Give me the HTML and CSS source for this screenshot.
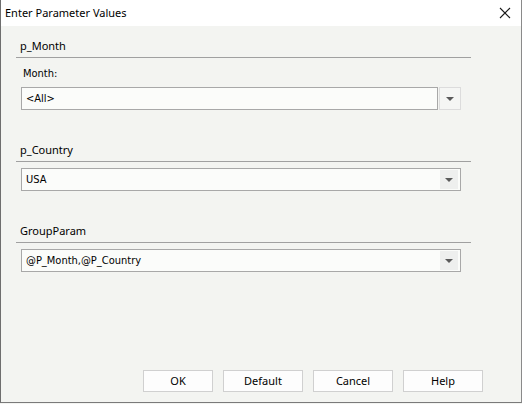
FILE: index.html
```html
<!DOCTYPE html>
<html>
<head>
<meta charset="utf-8">
<link rel="stylesheet" href="styles.css">
</head>
<body>
<div class="window">
  <div class="titlebar">
    <span class="title">Enter Parameter Values</span>
    <svg class="close" width="12" height="12" viewBox="0 0 12 12"><path d="M1 1 L11 11 M11 1 L1 11" stroke="#1a1a1a" stroke-width="1.1" fill="none"/></svg>
  </div>
  <div class="content">
    <div class="group">
      <div class="group-head">p_Month</div>
      <div class="group-body">
        <div class="field-label">Month:</div>
        <div class="split">
          <div class="textbox">&lt;All&gt;</div>
          <div class="dropbtn"><span class="arrow"></span></div>
        </div>
      </div>
    </div>
    <div class="group">
      <div class="group-head">p_Country</div>
      <div class="group-body">
        <div class="combo">
          <div class="combo-text">USA</div>
          <div class="combo-btn"><span class="arrow"></span></div>
        </div>
      </div>
    </div>
    <div class="group">
      <div class="group-head">GroupParam</div>
      <div class="group-body">
        <div class="combo">
          <div class="combo-text">@P_Month,@P_Country</div>
          <div class="combo-btn"><span class="arrow"></span></div>
        </div>
      </div>
    </div>
  </div>
  <div class="footer">
    <div class="btn btn-ok">OK</div>
    <div class="btn">Default</div>
    <div class="btn">Cancel</div>
    <div class="btn">Help</div>
  </div>
</div>
</body>
</html>
```
FILE: styles.css
```css
html, body {
  margin: 0;
  padding: 0;
  background: #f3f4f1;
}
.window {
  width: 520px;
  height: 402px;
  border-left: 1px solid #6e6e6e;
  border-right: 1px solid #8a8a8a;
  border-bottom: 1px solid #7a7a7a;
  background: #f3f4f1;
  display: flex;
  flex-direction: column;
  font-family: "Noto Sans", "Open Sans", sans-serif;
  color: #000;
}
.titlebar {
  height: 26px;
  background: #ffffff;
  display: flex;
  align-items: center;
  justify-content: space-between;
  padding: 0 10px 0 4px;
}
.title {
  font-size: 11px;
  line-height: 16px;
  margin-top: -1px;
}
.close {
  display: block;
}
.content {
  padding: 9px 0 0 15px;
}
.group + .group {
  margin-top: 29px;
}
.group-head {
  width: 451px;
  height: 22px;
  padding-left: 4px;
  border-bottom: 1px solid #a0a0a0;
  font-size: 11px;
  line-height: 22px;
}
.group-body {
  padding-left: 5px;
  padding-top: 6px;
}
.field-label {
  line-height: 14px;
  padding-left: 2px;
  margin-top: 3px;
  margin-bottom: 6px;
  font-family: "DejaVu Sans Condensed", "DejaVu Sans", sans-serif;
  font-size: 11px;
}
.split {
  display: flex;
  width: 440px;
  height: 23px;
}
.textbox {
  flex: 1;
  border: 1px solid #a8a8a8;
  background: #fbfcfa;
  font-family: "DejaVu Sans Condensed", "DejaVu Sans", sans-serif;
  font-size: 11px;
  line-height: 21px;
  padding-left: 4px;
}
.dropbtn {
  width: 20px;
  margin-left: 1px;
  border: 1px solid #dcdcdc;
  background: #f5f6f4;
  display: flex;
  align-items: center;
  justify-content: center;
}
.arrow {
  width: 0;
  height: 0;
  border-left: 4px solid transparent;
  border-right: 4px solid transparent;
  border-top: 4px solid #5a5a5a;
}
.combo {
  display: flex;
  width: 438px;
  height: 21px;
  border: 1px solid #a8a8a8;
  background: #fbfcfa;
}
.combo-text {
  flex: 1;
  font-family: "DejaVu Sans Condensed", "DejaVu Sans", sans-serif;
  font-size: 11px;
  line-height: 21px;
  padding-left: 4px;
}
.combo-btn {
  width: 18px;
  margin: 1px 2px 1px 0;
  background: #eeefee;
  display: flex;
  align-items: center;
  justify-content: center;
}
.footer {
  margin-top: auto;
  display: flex;
  justify-content: flex-end;
  gap: 10px;
  padding: 0 38px 10px 0;
}
.btn {
  width: 78px;
  height: 20px;
  border: 1px solid #d0d0d0;
  background: #fdfdfd;
  font-size: 11px;
  line-height: 20px;
  text-align: center;
}
.btn-ok {
  width: 68px;
}
```
